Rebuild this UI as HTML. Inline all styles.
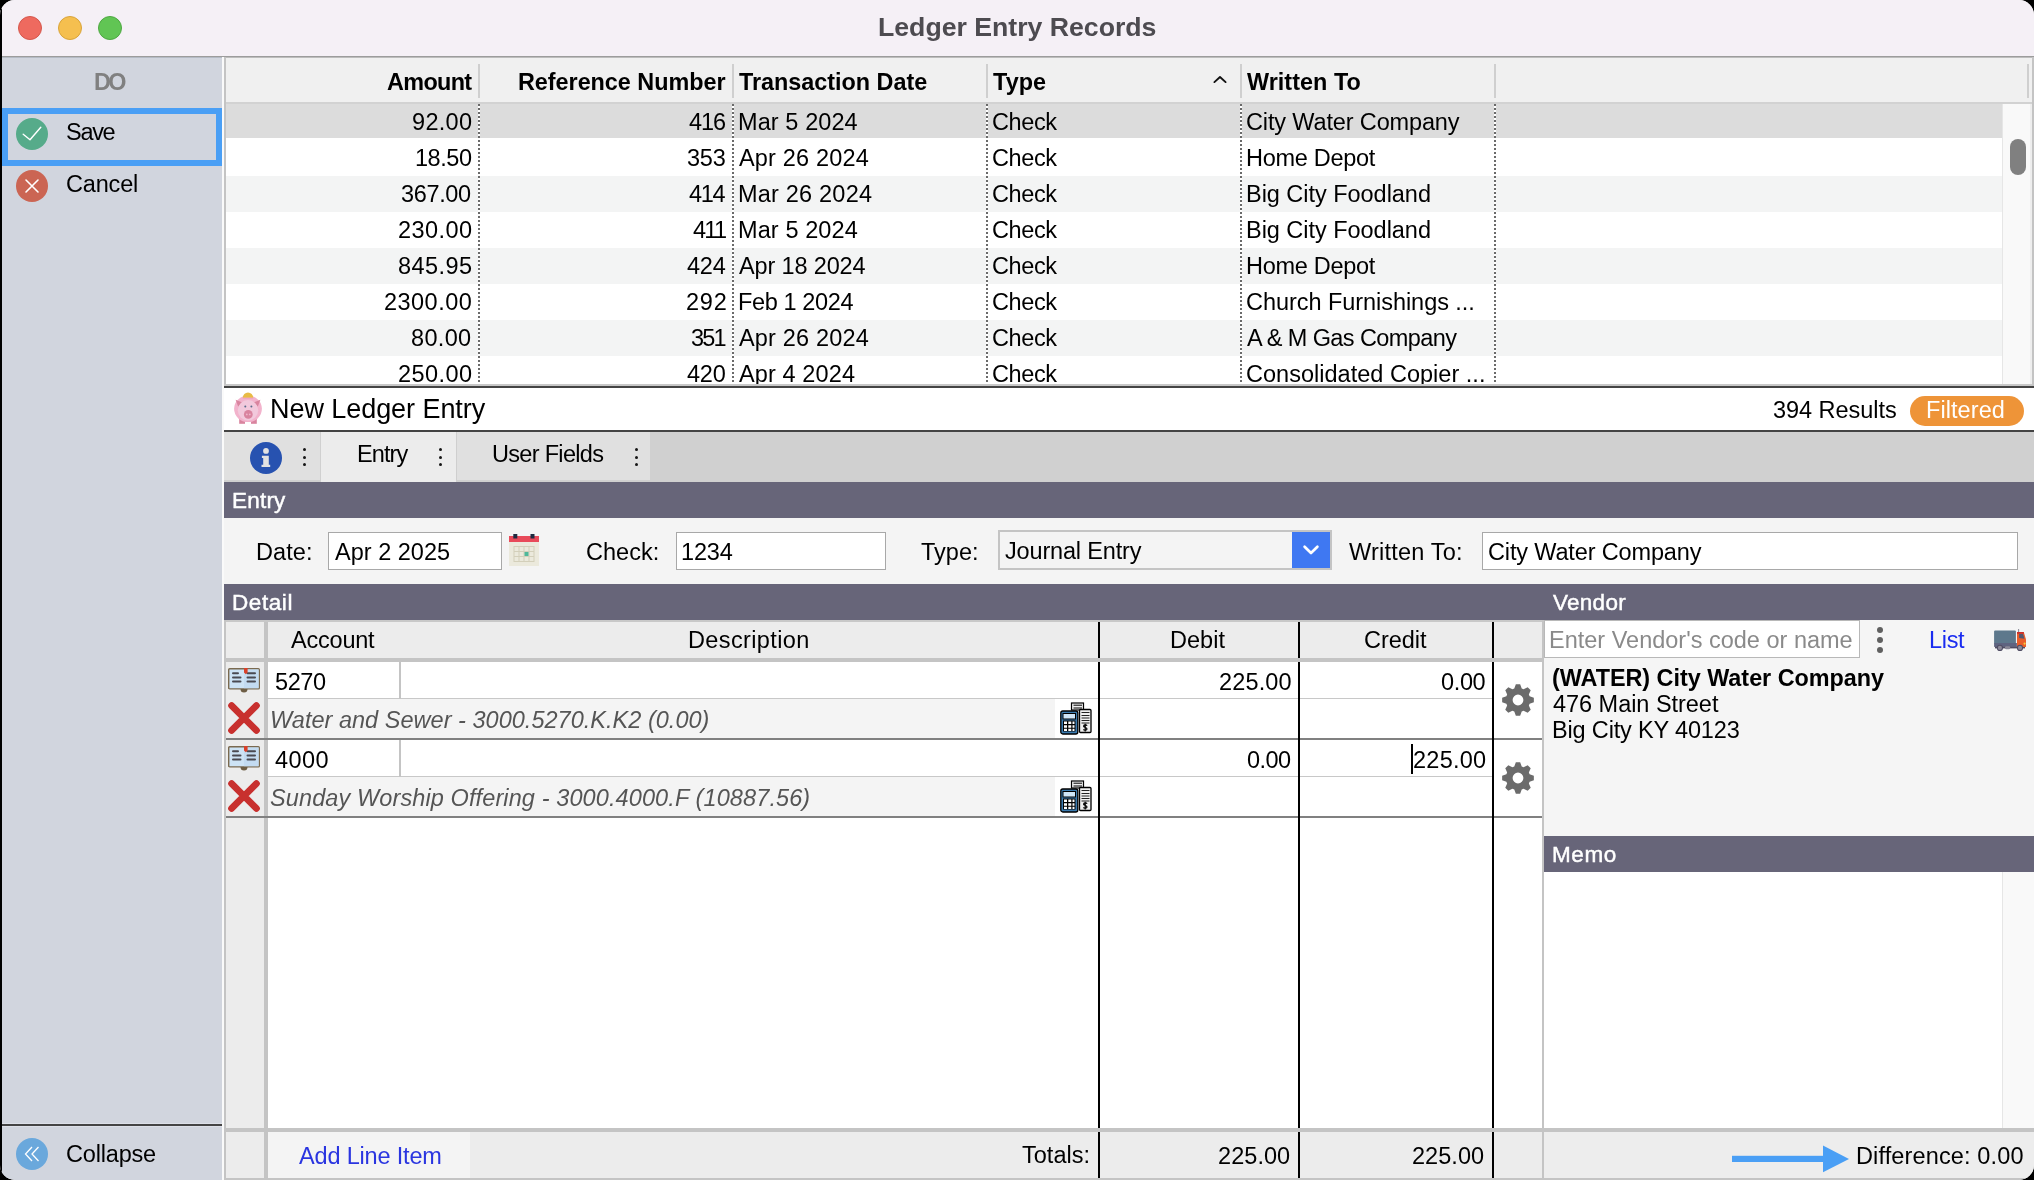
<!DOCTYPE html>
<html><head><meta charset="utf-8"><title>Ledger Entry Records</title><style>
html,body{margin:0;padding:0;width:2034px;height:1180px;overflow:hidden;background:#000;}
body{font-family:"Liberation Sans",sans-serif;color:#000;}
.a{position:absolute;}
.t{white-space:nowrap;will-change:transform;}
#win{position:absolute;left:0;top:0;width:2034px;height:1180px;border-radius:15px;overflow:hidden;background:#f4f4f4;}
svg{position:absolute;overflow:visible;}
</style></head><body><div id="win">
<div class="a" style="left:0px;top:0px;width:2034px;height:56px;background:#f5f0f6;"></div>
<div class="a" style="left:0px;top:56px;width:2034px;height:1px;background:#9c9c9c;"></div>
<div class="a" style="left:0px;top:0px;width:2px;height:1180px;background:#000;"></div>
<div class="a" style="left:18px;top:16px;width:24px;height:24px;border-radius:50%;background:#ee6a5f;box-sizing:border-box;border:0.5px solid #d5574c"></div>
<div class="a" style="left:58px;top:16px;width:24px;height:24px;border-radius:50%;background:#f5bf4f;box-sizing:border-box;border:0.5px solid #d9a43a"></div>
<div class="a" style="left:98px;top:16px;width:24px;height:24px;border-radius:50%;background:#61c554;box-sizing:border-box;border:0.5px solid #4ea842"></div>
<div class="a t" style="top:14.20px;font-size:26.7px;line-height:26.7px;color:#4d4b50;font-weight:700;letter-spacing:-0.019px;left:878.20px;">Ledger Entry Records</div>
<div class="a" style="left:2px;top:57px;width:220px;height:1123px;background:#d1d5de;"></div>
<div class="a" style="left:2px;top:57px;width:220px;height:1px;background:#b4bac4;"></div>
<div class="a" style="left:222px;top:57px;width:2px;height:1123px;background:#fafafa;"></div>
<div class="a" style="left:224px;top:57px;width:2px;height:329px;background:#c4c4c4;"></div>
<div class="a" style="left:224px;top:620px;width:2px;height:560px;background:#c4c4c4;"></div>
<div class="a t" style="top:70.99px;font-size:23.4px;line-height:23.4px;color:#808080;font-weight:700;letter-spacing:-2.592px;left:94.30px;">DO</div>
<div class="a" style="left:2px;top:108px;width:220px;height:58px;box-sizing:border-box;border:6px solid #4a9ff5"></div>
<svg style="left:16px;top:118px" width="32" height="32" viewBox="0 0 32 32"><circle cx="16" cy="16" r="16" fill="#56ab8a"/><path d="M7.2 16.2 L14 21.8 L24.8 9.2" stroke="#fff" stroke-width="1.4" fill="none" stroke-linecap="round" stroke-linejoin="round"/></svg>
<div class="a t" style="top:120.91px;font-size:23.5px;line-height:23.5px;color:#000;letter-spacing:-1.298px;left:65.70px;">Save</div>
<svg style="left:16px;top:170px" width="32" height="32" viewBox="0 0 32 32"><circle cx="16" cy="16" r="16" fill="#cb6553"/><path d="M10 10 L22 22 M22 10 L10 22" stroke="#fff" stroke-width="1.6" fill="none" stroke-linecap="round"/></svg>
<div class="a t" style="top:172.91px;font-size:23.5px;line-height:23.5px;color:#000;letter-spacing:-0.166px;left:65.70px;">Cancel</div>
<div class="a" style="left:2px;top:1123px;width:220px;height:4px;background:#dde0e8;"></div>
<div class="a" style="left:2px;top:1124px;width:220px;height:2px;background:#444444;"></div>
<svg style="left:16px;top:1138px" width="32" height="32" viewBox="0 0 32 32"><circle cx="16" cy="16" r="16" fill="#6aa8dc"/><path d="M16 9 L9.5 16 L16 23 M22.5 9 L16 16 L22.5 23" stroke="#fff" stroke-width="1.3" fill="none"/></svg>
<div class="a t" style="top:1142.91px;font-size:23.5px;line-height:23.5px;color:#000;letter-spacing:-0.182px;left:65.70px;">Collapse</div>
<div class="a" style="left:226px;top:57px;width:1806px;height:47px;background:#f0f0f0;"></div>
<div class="a" style="left:226px;top:57px;width:1806px;height:1px;background:#bdbdbd;"></div>
<div class="a" style="left:226px;top:102px;width:1806px;height:2px;background:#d6d6d6;"></div>
<div class="a" style="left:226px;top:104px;width:1776px;height:280px;background:#ffffff;"></div>
<div class="a" style="left:226px;top:176px;width:1776px;height:36px;background:#f3f4f4;"></div>
<div class="a" style="left:226px;top:248px;width:1776px;height:36px;background:#f3f4f4;"></div>
<div class="a" style="left:226px;top:320px;width:1776px;height:36px;background:#f3f4f4;"></div>
<div class="a" style="left:226px;top:104px;width:1776px;height:34px;background:#dcdcdc;"></div>
<div class="a" style="left:226px;top:102px;width:1806px;height:2px;background:#d2d2d2;"></div>
<div class="a" style="left:2002px;top:104px;width:1px;height:280px;background:#e6e6e6;"></div>
<div class="a" style="left:2003px;top:104px;width:28px;height:280px;background:#f9f9f9;"></div>
<div class="a" style="left:2030px;top:104px;width:2px;height:280px;background:#eeeeee;"></div>
<div class="a" style="left:2010px;top:139px;width:16px;height:36px;border-radius:8px;background:#808080"></div>
<div class="a" style="left:478px;top:64px;width:2px;height:34px;background:#cfcfcf;"></div>
<div class="a" style="left:732px;top:64px;width:2px;height:34px;background:#cfcfcf;"></div>
<div class="a" style="left:986px;top:64px;width:2px;height:34px;background:#cfcfcf;"></div>
<div class="a" style="left:1240px;top:64px;width:2px;height:34px;background:#cfcfcf;"></div>
<div class="a" style="left:1494px;top:64px;width:2px;height:34px;background:#cfcfcf;"></div>
<div class="a" style="left:2027px;top:64px;width:2px;height:34px;background:#cfcfcf;"></div>
<div class="a" style="left:478px;top:104px;width:2px;height:280px;background:repeating-linear-gradient(to bottom,#6a6a6a 0,#6a6a6a 2px,#ffffff 2px,#ffffff 4px)"></div>
<div class="a" style="left:732px;top:104px;width:2px;height:280px;background:repeating-linear-gradient(to bottom,#6a6a6a 0,#6a6a6a 2px,#ffffff 2px,#ffffff 4px)"></div>
<div class="a" style="left:986px;top:104px;width:2px;height:280px;background:repeating-linear-gradient(to bottom,#6a6a6a 0,#6a6a6a 2px,#ffffff 2px,#ffffff 4px)"></div>
<div class="a" style="left:1240px;top:104px;width:2px;height:280px;background:repeating-linear-gradient(to bottom,#6a6a6a 0,#6a6a6a 2px,#ffffff 2px,#ffffff 4px)"></div>
<div class="a" style="left:1494px;top:104px;width:2px;height:280px;background:repeating-linear-gradient(to bottom,#6a6a6a 0,#6a6a6a 2px,#ffffff 2px,#ffffff 4px)"></div>
<div class="a t" style="top:70.99px;font-size:23.4px;line-height:23.4px;color:#000;font-weight:700;letter-spacing:-0.651px;left:386.70px;">Amount</div>
<div class="a t" style="top:70.99px;font-size:23.4px;line-height:23.4px;color:#000;font-weight:700;letter-spacing:-0.033px;left:517.60px;">Reference Number</div>
<div class="a t" style="top:70.99px;font-size:23.4px;line-height:23.4px;color:#000;font-weight:700;letter-spacing:-0.018px;left:738.80px;">Transaction Date</div>
<div class="a t" style="top:70.99px;font-size:23.4px;line-height:23.4px;color:#000;font-weight:700;letter-spacing:0.084px;left:992.80px;">Type</div>
<div class="a t" style="top:70.99px;font-size:23.4px;line-height:23.4px;color:#000;font-weight:700;letter-spacing:0.035px;left:1246.50px;">Written To</div>
<svg style="left:1212px;top:73.5px" width="16" height="10" viewBox="0 0 16 10"><path d="M2.4 8.1 L8 3 L13.6 8.1" stroke="#111" stroke-width="1.9" fill="none" stroke-linecap="round" stroke-linejoin="round"/></svg>
<div class="a t" style="top:110.91px;font-size:23.5px;line-height:23.5px;color:#000;letter-spacing:0.316px;left:411.50px;">92.00</div>
<div class="a t" style="top:110.91px;font-size:23.5px;line-height:23.5px;color:#000;letter-spacing:-1.070px;left:688.50px;">416</div>
<div class="a t" style="top:110.91px;font-size:23.5px;line-height:23.5px;color:#000;letter-spacing:0.088px;left:737.80px;">Mar 5 2024</div>
<div class="a t" style="top:110.91px;font-size:23.5px;line-height:23.5px;color:#000;letter-spacing:-0.390px;left:991.70px;">Check</div>
<div class="a t" style="top:110.91px;font-size:23.5px;line-height:23.5px;color:#000;letter-spacing:-0.139px;left:1245.80px;">City Water Company</div>
<div class="a t" style="top:146.91px;font-size:23.5px;line-height:23.5px;color:#000;letter-spacing:-0.459px;left:414.60px;">18.50</div>
<div class="a t" style="top:146.91px;font-size:23.5px;line-height:23.5px;color:#000;letter-spacing:-0.220px;left:686.80px;">353</div>
<div class="a t" style="top:146.91px;font-size:23.5px;line-height:23.5px;color:#000;letter-spacing:0.172px;left:738.80px;">Apr 26 2024</div>
<div class="a t" style="top:146.91px;font-size:23.5px;line-height:23.5px;color:#000;letter-spacing:-0.390px;left:991.70px;">Check</div>
<div class="a t" style="top:146.91px;font-size:23.5px;line-height:23.5px;color:#000;letter-spacing:-0.288px;left:1245.80px;">Home Depot</div>
<div class="a t" style="top:182.91px;font-size:23.5px;line-height:23.5px;color:#000;letter-spacing:-0.341px;left:401.40px;">367.00</div>
<div class="a t" style="top:182.91px;font-size:23.5px;line-height:23.5px;color:#000;letter-spacing:-1.270px;left:688.90px;">414</div>
<div class="a t" style="top:182.91px;font-size:23.5px;line-height:23.5px;color:#000;letter-spacing:0.202px;left:737.80px;">Mar 26 2024</div>
<div class="a t" style="top:182.91px;font-size:23.5px;line-height:23.5px;color:#000;letter-spacing:-0.390px;left:991.70px;">Check</div>
<div class="a t" style="top:182.91px;font-size:23.5px;line-height:23.5px;color:#000;letter-spacing:-0.032px;left:1245.80px;">Big City Foodland</div>
<div class="a t" style="top:218.91px;font-size:23.5px;line-height:23.5px;color:#000;letter-spacing:0.419px;left:397.60px;">230.00</div>
<div class="a t" style="top:218.91px;font-size:23.5px;line-height:23.5px;color:#000;letter-spacing:-1.698px;left:692.50px;">411</div>
<div class="a t" style="top:218.91px;font-size:23.5px;line-height:23.5px;color:#000;letter-spacing:0.099px;left:737.80px;">Mar 5 2024</div>
<div class="a t" style="top:218.91px;font-size:23.5px;line-height:23.5px;color:#000;letter-spacing:-0.390px;left:991.70px;">Check</div>
<div class="a t" style="top:218.91px;font-size:23.5px;line-height:23.5px;color:#000;letter-spacing:-0.032px;left:1245.80px;">Big City Foodland</div>
<div class="a t" style="top:254.91px;font-size:23.5px;line-height:23.5px;color:#000;letter-spacing:0.419px;left:397.60px;">845.95</div>
<div class="a t" style="top:254.91px;font-size:23.5px;line-height:23.5px;color:#000;letter-spacing:-0.220px;left:686.80px;">424</div>
<div class="a t" style="top:254.91px;font-size:23.5px;line-height:23.5px;color:#000;letter-spacing:-0.148px;left:738.80px;">Apr 18 2024</div>
<div class="a t" style="top:254.91px;font-size:23.5px;line-height:23.5px;color:#000;letter-spacing:-0.390px;left:991.70px;">Check</div>
<div class="a t" style="top:254.91px;font-size:23.5px;line-height:23.5px;color:#000;letter-spacing:-0.288px;left:1245.80px;">Home Depot</div>
<div class="a t" style="top:290.91px;font-size:23.5px;line-height:23.5px;color:#000;letter-spacing:0.471px;left:383.80px;">2300.00</div>
<div class="a t" style="top:290.91px;font-size:23.5px;line-height:23.5px;color:#000;letter-spacing:0.780px;left:685.80px;">292</div>
<div class="a t" style="top:290.91px;font-size:23.5px;line-height:23.5px;color:#000;letter-spacing:-0.381px;left:737.80px;">Feb 1 2024</div>
<div class="a t" style="top:290.91px;font-size:23.5px;line-height:23.5px;color:#000;letter-spacing:-0.390px;left:991.70px;">Check</div>
<div class="a t" style="top:290.91px;font-size:23.5px;line-height:23.5px;color:#000;letter-spacing:-0.050px;left:1245.80px;">Church Furnishings ...</div>
<div class="a t" style="top:326.91px;font-size:23.5px;line-height:23.5px;color:#000;letter-spacing:0.341px;left:411.40px;">80.00</div>
<div class="a t" style="top:326.91px;font-size:23.5px;line-height:23.5px;color:#000;letter-spacing:-1.820px;left:691.00px;">351</div>
<div class="a t" style="top:326.91px;font-size:23.5px;line-height:23.5px;color:#000;letter-spacing:0.172px;left:738.80px;">Apr 26 2024</div>
<div class="a t" style="top:326.91px;font-size:23.5px;line-height:23.5px;color:#000;letter-spacing:-0.390px;left:991.70px;">Check</div>
<div class="a t" style="top:326.91px;font-size:23.5px;line-height:23.5px;color:#000;letter-spacing:-0.592px;left:1246.80px;">A &amp; M Gas Company</div>
<div class="a t" style="top:362.91px;font-size:23.5px;line-height:23.5px;color:#000;letter-spacing:0.419px;left:397.60px;">250.00</div>
<div class="a t" style="top:362.91px;font-size:23.5px;line-height:23.5px;color:#000;letter-spacing:-0.220px;left:686.80px;">420</div>
<div class="a t" style="top:362.91px;font-size:23.5px;line-height:23.5px;color:#000;letter-spacing:0.110px;left:738.80px;">Apr 4 2024</div>
<div class="a t" style="top:362.91px;font-size:23.5px;line-height:23.5px;color:#000;letter-spacing:-0.390px;left:991.70px;">Check</div>
<div class="a t" style="top:362.91px;font-size:23.5px;line-height:23.5px;color:#000;letter-spacing:0.017px;left:1245.80px;">Consolidated Copier ...</div>
<div class="a" style="left:224px;top:384px;width:1810px;height:2px;background:#c8c8c8;"></div>
<div class="a" style="left:2032px;top:57px;width:2px;height:329px;background:#c4c4c4;"></div>
<div class="a" style="left:224px;top:386px;width:1810px;height:2px;background:#444444;"></div>
<div class="a" style="left:224px;top:388px;width:1810px;height:42px;background:#ffffff;"></div>
<div class="a" style="left:224px;top:430px;width:1810px;height:2px;background:#444444;"></div>
<svg style="left:232px;top:390px" width="32" height="36" viewBox="0 0 32 36">
<rect x="7.2" y="27" width="5.8" height="6.8" fill="#d9849f"/>
<rect x="19" y="27" width="5.8" height="6.8" fill="#d9849f"/>
<ellipse cx="16" cy="18.8" rx="13.9" ry="13.3" fill="#f2b3cc"/>
<path d="M10.8 7.8 A5.2 5.2 0 0 1 21.2 7.8 Z" fill="#e8bb45"/>
<rect x="10.8" y="7.8" width="10.4" height="1.2" fill="#eea6c4"/>
<path d="M3.6 9.8 L10.4 12.4 L6.2 16.8 Z" fill="#d9849f"/>
<path d="M28.4 9.8 L21.6 12.4 L25.8 16.8 Z" fill="#d9849f"/>
<circle cx="16" cy="20.3" r="10.2" fill="#f2c9dc"/>
<circle cx="13.3" cy="16.6" r="1" fill="#5a6a8a"/>
<circle cx="19.4" cy="16.6" r="1" fill="#5a6a8a"/>
<circle cx="16.3" cy="24.4" r="4.4" fill="#d9849f"/>
<circle cx="14.8" cy="24.4" r="0.9" fill="#eeb5cb"/>
<circle cx="17.8" cy="24.4" r="0.9" fill="#eeb5cb"/>
</svg>
<div class="a t" style="top:395.94px;font-size:27px;line-height:27px;color:#000;letter-spacing:-0.060px;left:269.80px;">New Ledger Entry</div>
<div class="a t" style="top:398.91px;font-size:23.5px;line-height:23.5px;color:#000;letter-spacing:-0.035px;left:1773.00px;">394 Results</div>
<div class="a" style="left:1910px;top:396px;width:114px;height:30px;border-radius:15px;background:#ee9438"></div>
<div class="a t" style="top:398.91px;font-size:23.5px;line-height:23.5px;color:#fff;letter-spacing:0.073px;left:1926.00px;">Filtered</div>
<div class="a" style="left:224px;top:432px;width:1810px;height:50px;background:#d0d0d0;"></div>
<div class="a" style="left:224px;top:432px;width:96px;height:48px;background:#e0e0e0;"></div>
<div class="a" style="left:224px;top:480px;width:96px;height:2px;background:#d0d0d0;"></div>
<div class="a" style="left:320px;top:432px;width:1px;height:50px;background:#d0d0d0;"></div>
<div class="a" style="left:321px;top:432px;width:135px;height:50px;background:#ececec;"></div>
<div class="a" style="left:456px;top:432px;width:1px;height:50px;background:#cfcfcf;"></div>
<div class="a" style="left:457px;top:432px;width:193px;height:50px;background:#e0e0e0;"></div>
<div class="a" style="left:457px;top:480px;width:193px;height:2px;background:#d0d0d0;"></div>
<svg style="left:250px;top:442px" width="32" height="32" viewBox="0 0 32 32"><circle cx="16" cy="16" r="16" fill="#2752b0"/><circle cx="16" cy="8.9" r="2.9" fill="#e2e2e2"/><path d="M11.9 13.8 H18.8 V22.7 H20.2 V25.1 H11.5 V22.7 H13.2 V16 H11.9 Z" fill="#e2e2e2"/></svg>
<div class="a" style="left:302.5px;top:448.3px;width:3.0px;height:3.0px;border-radius:50%;background:#151515"></div>
<div class="a" style="left:302.5px;top:455.5px;width:3.0px;height:3.0px;border-radius:50%;background:#151515"></div>
<div class="a" style="left:302.5px;top:462.7px;width:3.0px;height:3.0px;border-radius:50%;background:#151515"></div>
<div class="a t" style="top:443.41px;font-size:23.5px;line-height:23.5px;color:#000;letter-spacing:-0.900px;left:356.50px;">Entry</div>
<div class="a" style="left:438.5px;top:448.3px;width:3.0px;height:3.0px;border-radius:50%;background:#151515"></div>
<div class="a" style="left:438.5px;top:455.5px;width:3.0px;height:3.0px;border-radius:50%;background:#151515"></div>
<div class="a" style="left:438.5px;top:462.7px;width:3.0px;height:3.0px;border-radius:50%;background:#151515"></div>
<div class="a t" style="top:443.41px;font-size:23.5px;line-height:23.5px;color:#000;letter-spacing:-0.688px;left:492.40px;">User Fields</div>
<div class="a" style="left:634.5px;top:448.3px;width:3.0px;height:3.0px;border-radius:50%;background:#151515"></div>
<div class="a" style="left:634.5px;top:455.5px;width:3.0px;height:3.0px;border-radius:50%;background:#151515"></div>
<div class="a" style="left:634.5px;top:462.7px;width:3.0px;height:3.0px;border-radius:50%;background:#151515"></div>
<div class="a" style="left:224px;top:482px;width:1810px;height:36px;background:#676579;"></div>
<div class="a t" style="top:489.75px;font-size:22.5px;line-height:22.5px;color:#fff;letter-spacing:0.209px;left:231.80px;-webkit-text-stroke:0.45px #fff;">Entry</div>
<div class="a" style="left:224px;top:518px;width:1810px;height:66px;background:#f4f4f4;"></div>
<div class="a t" style="top:540.91px;font-size:23.5px;line-height:23.5px;color:#000;letter-spacing:0.065px;left:256.00px;">Date:</div>
<div class="a" style="left:328px;top:532px;width:174px;height:38px;box-sizing:border-box;border:1px solid #a8a8a8;background:#fff"></div>
<div class="a t" style="top:540.91px;font-size:23.5px;line-height:23.5px;color:#000;letter-spacing:0.010px;left:335.00px;">Apr 2 2025</div>
<svg style="left:509px;top:534px" width="30" height="32" viewBox="0 0 30 32">
<rect x="0" y="2" width="30" height="6" fill="#e84a5a"/>
<rect x="0" y="8" width="30" height="24" fill="#ebe9dc"/>
<rect x="4.3" y="0" width="4" height="4.5" fill="#1e2a40"/>
<rect x="21.5" y="0" width="4" height="4.5" fill="#1e2a40"/>
<g fill="none" stroke="#d3cfba" stroke-width="1">
<rect x="5" y="12.5" width="20" height="15"/>
<path d="M10 12.5 V27.5 M15 12.5 V27.5 M20 12.5 V27.5 M5 17.5 H25 M5 22.5 H25"/>
</g>
<rect x="15.5" y="18" width="4" height="4" fill="#4fb89a"/>
</svg>
<div class="a t" style="top:540.91px;font-size:23.5px;line-height:23.5px;color:#000;letter-spacing:0.038px;left:585.90px;">Check:</div>
<div class="a" style="left:676px;top:532px;width:210px;height:38px;box-sizing:border-box;border:1px solid #a8a8a8;background:#fff"></div>
<div class="a t" style="top:540.91px;font-size:23.5px;line-height:23.5px;color:#000;letter-spacing:-0.136px;left:681.00px;">1234</div>
<div class="a t" style="top:540.91px;font-size:23.5px;line-height:23.5px;color:#000;letter-spacing:0.013px;left:921.00px;">Type:</div>
<div class="a" style="left:998px;top:530px;width:334px;height:40px;box-sizing:border-box;border:2px solid #c4c4c4;background:#f4f4f4"></div>
<div class="a" style="left:1292px;top:532px;width:38px;height:36px;background:#3f78f2;"></div>
<svg style="left:1301px;top:543px" width="20" height="14" viewBox="0 0 20 14"><path d="M3.6 3.8 L10 10 L16.4 3.8" stroke="#fff" stroke-width="2.7" fill="none" stroke-linecap="round" stroke-linejoin="round"/></svg>
<div class="a t" style="top:539.91px;font-size:23.5px;line-height:23.5px;color:#000;letter-spacing:-0.167px;left:1005.00px;">Journal Entry</div>
<div class="a t" style="top:540.91px;font-size:23.5px;line-height:23.5px;color:#000;letter-spacing:0.205px;left:1349.00px;">Written To:</div>
<div class="a" style="left:1482px;top:532px;width:536px;height:38px;box-sizing:border-box;border:1px solid #a8a8a8;background:#fff"></div>
<div class="a t" style="top:540.91px;font-size:23.5px;line-height:23.5px;color:#000;letter-spacing:-0.144px;left:1487.90px;">City Water Company</div>
<div class="a" style="left:224px;top:584px;width:1810px;height:36px;background:#676579;"></div>
<div class="a t" style="top:591.75px;font-size:22.5px;line-height:22.5px;color:#fff;letter-spacing:0.575px;left:231.80px;-webkit-text-stroke:0.45px #fff;">Detail</div>
<div class="a t" style="top:591.75px;font-size:22.5px;line-height:22.5px;color:#fff;letter-spacing:0.276px;left:1552.60px;-webkit-text-stroke:0.45px #fff;">Vendor</div>
<div class="a" style="left:226px;top:620px;width:1316px;height:508px;background:#ffffff;"></div>
<div class="a" style="left:226px;top:620px;width:38px;height:560px;background:#ececec;"></div>
<div class="a" style="left:264px;top:620px;width:4px;height:560px;background:#c4c4c4;"></div>
<div class="a" style="left:268px;top:620px;width:1274px;height:38px;background:#ececec;"></div>
<div class="a" style="left:226px;top:620px;width:1316px;height:2px;background:#c8c8c8;"></div>
<div class="a" style="left:226px;top:658px;width:1316px;height:4px;background:#c4c4c4;"></div>
<div class="a t" style="top:628.91px;font-size:23.5px;line-height:23.5px;color:#000;letter-spacing:-0.214px;left:291.30px;">Account</div>
<div class="a t" style="top:628.91px;font-size:23.5px;line-height:23.5px;color:#000;letter-spacing:0.372px;left:687.50px;">Description</div>
<div class="a t" style="top:628.91px;font-size:23.5px;line-height:23.5px;color:#000;letter-spacing:0.042px;left:1169.70px;">Debit</div>
<div class="a t" style="top:628.91px;font-size:23.5px;line-height:23.5px;color:#000;letter-spacing:-0.031px;left:1363.80px;">Credit</div>
<div class="a" style="left:268px;top:662px;width:830px;height:37px;background:#ffffff;"></div>
<div class="a" style="left:268px;top:698px;width:830px;height:1px;background:#c8c8c8;"></div>
<div class="a" style="left:399px;top:662px;width:2px;height:37px;background:#c4c4c4;"></div>
<div class="a" style="left:268px;top:699px;width:787px;height:39px;background:#f4f4f4;"></div>
<div class="a" style="left:1055px;top:699px;width:43px;height:39px;background:#ffffff;"></div>
<div class="a" style="left:1100px;top:698px;width:392px;height:1px;background:#c8c8c8;"></div>
<div class="a" style="left:226px;top:738px;width:1316px;height:2px;background:#808080;"></div>
<div class="a t" style="top:670.91px;font-size:23.5px;line-height:23.5px;color:#000;letter-spacing:-0.436px;left:275.30px;">5270</div>
<div class="a t" style="top:708.91px;font-size:23.5px;line-height:23.5px;color:#555555;font-style:italic;letter-spacing:0.025px;left:269.60px;">Water and Sewer - 3000.5270.K.K2 (0.00)</div>
<div class="a t" style="top:670.91px;font-size:23.5px;line-height:23.5px;color:#000;letter-spacing:0.139px;left:1219.30px;">225.00</div>
<div class="a t" style="top:670.91px;font-size:23.5px;line-height:23.5px;color:#000;letter-spacing:-0.356px;left:1440.50px;">0.00</div>
<svg style="left:228px;top:668px" width="32" height="24" viewBox="0 0 32 24">
<rect x="0.7" y="0.7" width="30.6" height="20.2" rx="1" fill="#cde3f5" stroke="#7a6a50" stroke-width="1.4"/>
<rect x="16" y="1.4" width="14.6" height="18.8" fill="#c3dbf1"/>
<path d="M5 5.2 H10 M5 9.5 H12.5 M5 13.5 H12.5 M19.5 5.2 H27 M19.5 9.5 H27 M19.5 13.5 H27" stroke="#4a4a52" stroke-width="2" stroke-linecap="round"/>
<path d="M16 0 H19.6 V4.6 L17.8 6.2 L16 4.6 Z" fill="#d8402a"/>
<path d="M12.5 21 A3.5 3.5 0 0 0 19.5 21 Z" fill="#6e5e45"/>
</svg>
<svg style="left:228px;top:702px" width="32" height="32" viewBox="0 0 32 32"><path d="M3.6 3.6 L28.4 28.4 M28.4 3.6 L3.6 28.4" stroke="#c8302e" stroke-width="6.8" stroke-linecap="round"/></svg>
<svg style="left:1060px;top:702px" width="32" height="32" viewBox="0 0 32 32">
<rect x="11.5" y="1" width="12" height="7" fill="#eee" stroke="#000" stroke-width="1.2"/>
<path d="M13.5 3.2 H22 M13.5 6 H22" stroke="#000" stroke-width="1"/>
<rect x="19.5" y="7.5" width="11.5" height="23" rx="1" fill="#f0f0f0" stroke="#000" stroke-width="1.3"/>
<path d="M21.5 10.5 H29.5 M21.5 13.5 H29.5 M21.5 16 H29.5 M21.5 18.5 H29.5 M21.5 21 H29.5" stroke="#222" stroke-width="1"/>
<path d="M27 23.8 C26.6 22.6 23.6 22.6 23.6 24.3 C23.6 25.8 27 25.2 27 27 C27 28.6 23.8 28.6 23.4 27.4 M25.2 21.8 V29.6" stroke="#000" stroke-width="1.2" fill="none"/>
<rect x="0.8" y="9" width="17" height="23" rx="2" fill="#3a7bb0" stroke="#000" stroke-width="1.3"/>
<rect x="3" y="11.5" width="12.5" height="5.5" fill="#cfe6f8" stroke="#000" stroke-width="1"/>
<rect x="3" y="18.5" width="12.5" height="11" fill="#000"/>
<path d="M4 19.5 h3 v2.5 h-3 z M8.3 19.5 h3 v2.5 h-3 z M12.5 19.5 h2 v2.5 h-2 z M4 23.2 h3 v2.5 h-3 z M8.3 23.2 h3 v2.5 h-3 z M12.5 23.2 h2 v2.5 h-2 z M4 26.8 h3 v2.2 h-3 z M8.3 26.8 h3 v2.2 h-3 z M12.5 26.8 h2 v2.2 h-2 z" fill="#fff"/>
</svg>
<svg style="left:1502px;top:684px" width="32" height="32" viewBox="-16 -16 32 32"><path d="M-3.72 -11.62 L-2.15 -15.85 L2.15 -15.85 L3.72 -11.62 L5.58 -10.85 L9.69 -12.73 L12.73 -9.69 L10.85 -5.58 L11.62 -3.72 L15.85 -2.15 L15.85 2.15 L11.62 3.72 L10.85 5.58 L12.73 9.69 L9.69 12.73 L5.58 10.85 L3.72 11.62 L2.15 15.85 L-2.15 15.85 L-3.72 11.62 L-5.58 10.85 L-9.69 12.73 L-12.73 9.69 L-10.85 5.58 L-11.62 3.72 L-15.85 2.15 L-15.85 -2.15 L-11.62 -3.72 L-10.85 -5.58 L-12.73 -9.69 L-9.69 -12.73 L-5.58 -10.85 Z M5.4 0 A5.4 5.4 0 1 0 -5.4 0 A5.4 5.4 0 1 0 5.4 0 Z" fill="#6b6b6b" fill-rule="evenodd"/></svg>
<div class="a" style="left:268px;top:740px;width:830px;height:37px;background:#ffffff;"></div>
<div class="a" style="left:268px;top:776px;width:830px;height:1px;background:#c8c8c8;"></div>
<div class="a" style="left:399px;top:740px;width:2px;height:37px;background:#c4c4c4;"></div>
<div class="a" style="left:268px;top:777px;width:787px;height:39px;background:#f4f4f4;"></div>
<div class="a" style="left:1055px;top:777px;width:43px;height:39px;background:#ffffff;"></div>
<div class="a" style="left:1100px;top:776px;width:392px;height:1px;background:#c8c8c8;"></div>
<div class="a" style="left:226px;top:816px;width:1316px;height:2px;background:#808080;"></div>
<div class="a t" style="top:748.91px;font-size:23.5px;line-height:23.5px;color:#000;letter-spacing:0.397px;left:275.30px;">4000</div>
<div class="a t" style="top:786.91px;font-size:23.5px;line-height:23.5px;color:#555555;font-style:italic;letter-spacing:0.107px;left:270.40px;">Sunday Worship Offering - 3000.4000.F (10887.56)</div>
<div class="a t" style="top:748.91px;font-size:23.5px;line-height:23.5px;color:#000;letter-spacing:-0.556px;left:1247.00px;">0.00</div>
<div class="a t" style="top:748.91px;font-size:23.5px;line-height:23.5px;color:#000;letter-spacing:0.259px;left:1413.40px;">225.00</div>
<svg style="left:228px;top:746px" width="32" height="24" viewBox="0 0 32 24">
<rect x="0.7" y="0.7" width="30.6" height="20.2" rx="1" fill="#cde3f5" stroke="#7a6a50" stroke-width="1.4"/>
<rect x="16" y="1.4" width="14.6" height="18.8" fill="#c3dbf1"/>
<path d="M5 5.2 H10 M5 9.5 H12.5 M5 13.5 H12.5 M19.5 5.2 H27 M19.5 9.5 H27 M19.5 13.5 H27" stroke="#4a4a52" stroke-width="2" stroke-linecap="round"/>
<path d="M16 0 H19.6 V4.6 L17.8 6.2 L16 4.6 Z" fill="#d8402a"/>
<path d="M12.5 21 A3.5 3.5 0 0 0 19.5 21 Z" fill="#6e5e45"/>
</svg>
<svg style="left:228px;top:780px" width="32" height="32" viewBox="0 0 32 32"><path d="M3.6 3.6 L28.4 28.4 M28.4 3.6 L3.6 28.4" stroke="#c8302e" stroke-width="6.8" stroke-linecap="round"/></svg>
<svg style="left:1060px;top:780px" width="32" height="32" viewBox="0 0 32 32">
<rect x="11.5" y="1" width="12" height="7" fill="#eee" stroke="#000" stroke-width="1.2"/>
<path d="M13.5 3.2 H22 M13.5 6 H22" stroke="#000" stroke-width="1"/>
<rect x="19.5" y="7.5" width="11.5" height="23" rx="1" fill="#f0f0f0" stroke="#000" stroke-width="1.3"/>
<path d="M21.5 10.5 H29.5 M21.5 13.5 H29.5 M21.5 16 H29.5 M21.5 18.5 H29.5 M21.5 21 H29.5" stroke="#222" stroke-width="1"/>
<path d="M27 23.8 C26.6 22.6 23.6 22.6 23.6 24.3 C23.6 25.8 27 25.2 27 27 C27 28.6 23.8 28.6 23.4 27.4 M25.2 21.8 V29.6" stroke="#000" stroke-width="1.2" fill="none"/>
<rect x="0.8" y="9" width="17" height="23" rx="2" fill="#3a7bb0" stroke="#000" stroke-width="1.3"/>
<rect x="3" y="11.5" width="12.5" height="5.5" fill="#cfe6f8" stroke="#000" stroke-width="1"/>
<rect x="3" y="18.5" width="12.5" height="11" fill="#000"/>
<path d="M4 19.5 h3 v2.5 h-3 z M8.3 19.5 h3 v2.5 h-3 z M12.5 19.5 h2 v2.5 h-2 z M4 23.2 h3 v2.5 h-3 z M8.3 23.2 h3 v2.5 h-3 z M12.5 23.2 h2 v2.5 h-2 z M4 26.8 h3 v2.2 h-3 z M8.3 26.8 h3 v2.2 h-3 z M12.5 26.8 h2 v2.2 h-2 z" fill="#fff"/>
</svg>
<svg style="left:1502px;top:762px" width="32" height="32" viewBox="-16 -16 32 32"><path d="M-3.72 -11.62 L-2.15 -15.85 L2.15 -15.85 L3.72 -11.62 L5.58 -10.85 L9.69 -12.73 L12.73 -9.69 L10.85 -5.58 L11.62 -3.72 L15.85 -2.15 L15.85 2.15 L11.62 3.72 L10.85 5.58 L12.73 9.69 L9.69 12.73 L5.58 10.85 L3.72 11.62 L2.15 15.85 L-2.15 15.85 L-3.72 11.62 L-5.58 10.85 L-9.69 12.73 L-12.73 9.69 L-10.85 5.58 L-11.62 3.72 L-15.85 2.15 L-15.85 -2.15 L-11.62 -3.72 L-10.85 -5.58 L-12.73 -9.69 L-9.69 -12.73 L-5.58 -10.85 Z M5.4 0 A5.4 5.4 0 1 0 -5.4 0 A5.4 5.4 0 1 0 5.4 0 Z" fill="#6b6b6b" fill-rule="evenodd"/></svg>
<div class="a" style="left:1411px;top:744px;width:2px;height:30px;background:#000;"></div>
<div class="a" style="left:1494px;top:622px;width:48px;height:36px;background:#ececec;"></div>
<div class="a" style="left:1542px;top:620px;width:2px;height:560px;background:#c4c4c4;"></div>
<div class="a" style="left:226px;top:1128px;width:1808px;height:4px;background:#c4c4c4;"></div>
<div class="a" style="left:268px;top:1132px;width:1274px;height:46px;background:#ececec;"></div>
<div class="a" style="left:268px;top:1132px;width:202px;height:46px;background:#f4f4f4;"></div>
<div class="a" style="left:226px;top:1178px;width:1808px;height:2px;background:#c4c4c4;"></div>
<div class="a" style="left:1098px;top:622px;width:2px;height:36px;background:#000;"></div>
<div class="a" style="left:1098px;top:662px;width:2px;height:466px;background:#000;"></div>
<div class="a" style="left:1098px;top:1132px;width:2px;height:46px;background:#000;"></div>
<div class="a" style="left:1298px;top:622px;width:2px;height:36px;background:#000;"></div>
<div class="a" style="left:1298px;top:662px;width:2px;height:466px;background:#000;"></div>
<div class="a" style="left:1298px;top:1132px;width:2px;height:46px;background:#000;"></div>
<div class="a" style="left:1492px;top:622px;width:2px;height:36px;background:#000;"></div>
<div class="a" style="left:1492px;top:662px;width:2px;height:466px;background:#000;"></div>
<div class="a" style="left:1492px;top:1132px;width:2px;height:46px;background:#000;"></div>
<div class="a t" style="top:1144.91px;font-size:23.5px;line-height:23.5px;color:#2a35e0;letter-spacing:-0.177px;left:298.70px;">Add Line Item</div>
<div class="a t" style="top:1143.91px;font-size:23.5px;line-height:23.5px;color:#000;letter-spacing:0.018px;left:1021.50px;">Totals:</div>
<div class="a t" style="top:1144.91px;font-size:23.5px;line-height:23.5px;color:#000;letter-spacing:0.059px;left:1217.90px;">225.00</div>
<div class="a t" style="top:1144.91px;font-size:23.5px;line-height:23.5px;color:#000;letter-spacing:0.039px;left:1412.00px;">225.00</div>
<div class="a" style="left:1544px;top:620px;width:490px;height:216px;background:#f5f5f5;"></div>
<div class="a" style="left:1544px;top:620px;width:316px;height:38px;box-sizing:border-box;border:1px solid #b8b8b8;background:#fff"></div>
<div class="a t" style="top:628.91px;font-size:23.5px;line-height:23.5px;color:#8a8a8a;letter-spacing:0.001px;left:1549.40px;">Enter Vendor's code or name</div>
<div class="a" style="left:1877px;top:627px;width:6px;height:6px;border-radius:50%;background:#606060"></div>
<div class="a" style="left:1877px;top:637px;width:6px;height:6px;border-radius:50%;background:#606060"></div>
<div class="a" style="left:1877px;top:647px;width:6px;height:6px;border-radius:50%;background:#606060"></div>
<div class="a t" style="top:628.91px;font-size:23.5px;line-height:23.5px;color:#1a2cf0;letter-spacing:-0.314px;left:1928.70px;">List</div>
<svg style="left:1990px;top:624px" width="40" height="30" viewBox="0 0 40 30">
<rect x="4.1" y="6.4" width="21.8" height="13.5" rx="1" fill="#5d788c"/>
<rect x="4.1" y="19" width="22.8" height="3.9" fill="#5e6380"/>
<rect x="5" y="22.6" width="30" height="1.8" fill="#4f4c63"/>
<rect x="15" y="22.3" width="5.2" height="2.9" rx="1.2" fill="#8a8898"/>
<path d="M27 8.1 H33.8 L36 15.5 V22.9 H27 Z" fill="#e85d2a"/>
<rect x="27" y="8.1" width="6.8" height="1.6" fill="#c82a2a"/>
<path d="M29.1 9.9 H33.1 L34.4 14.8 L29.1 13.9 Z" fill="#54566e"/>
<rect x="28.2" y="5" width="0.9" height="3" fill="#7a7a88"/>
<circle cx="34.6" cy="19.6" r="1.1" fill="#f5d040"/>
<circle cx="9.9" cy="23.9" r="3.1" fill="#4f4c63"/><circle cx="9.9" cy="23.9" r="2.1" fill="#8a8898"/>
<circle cx="30" cy="23.9" r="3.1" fill="#4f4c63"/><circle cx="30" cy="23.9" r="2.1" fill="#8a8898"/>
</svg>
<div class="a t" style="top:666.99px;font-size:23.4px;line-height:23.4px;color:#000;font-weight:700;letter-spacing:-0.023px;left:1551.60px;">(WATER) City Water Company</div>
<div class="a t" style="top:692.91px;font-size:23.5px;line-height:23.5px;color:#000;letter-spacing:-0.034px;left:1552.60px;">476 Main Street</div>
<div class="a t" style="top:718.91px;font-size:23.5px;line-height:23.5px;color:#000;letter-spacing:-0.159px;left:1551.60px;">Big City KY 40123</div>
<div class="a" style="left:1544px;top:836px;width:490px;height:36px;background:#676579;"></div>
<div class="a t" style="top:843.75px;font-size:22.5px;line-height:22.5px;color:#fff;letter-spacing:0.567px;left:1551.60px;-webkit-text-stroke:0.45px #fff;">Memo</div>
<div class="a" style="left:1544px;top:872px;width:458px;height:256px;background:#ffffff;"></div>
<div class="a" style="left:2002px;top:872px;width:1px;height:256px;background:#e6e6e6;"></div>
<div class="a" style="left:2003px;top:872px;width:31px;height:256px;background:#f9f9f9;"></div>
<div class="a" style="left:1544px;top:1132px;width:490px;height:46px;background:#ededed;"></div>
<svg style="left:1731px;top:1145px" width="120" height="28" viewBox="0 0 120 28"><rect x="1" y="10.8" width="92" height="6.2" fill="#4a9ff5"/><path d="M92 0.6 L118 13.9 L92 27.2 Z" fill="#4a9ff5"/></svg>
<div class="a t" style="top:1144.91px;font-size:23.5px;line-height:23.5px;color:#000;letter-spacing:0.133px;left:1856.00px;">Difference: 0.00</div>
</div></body></html>
